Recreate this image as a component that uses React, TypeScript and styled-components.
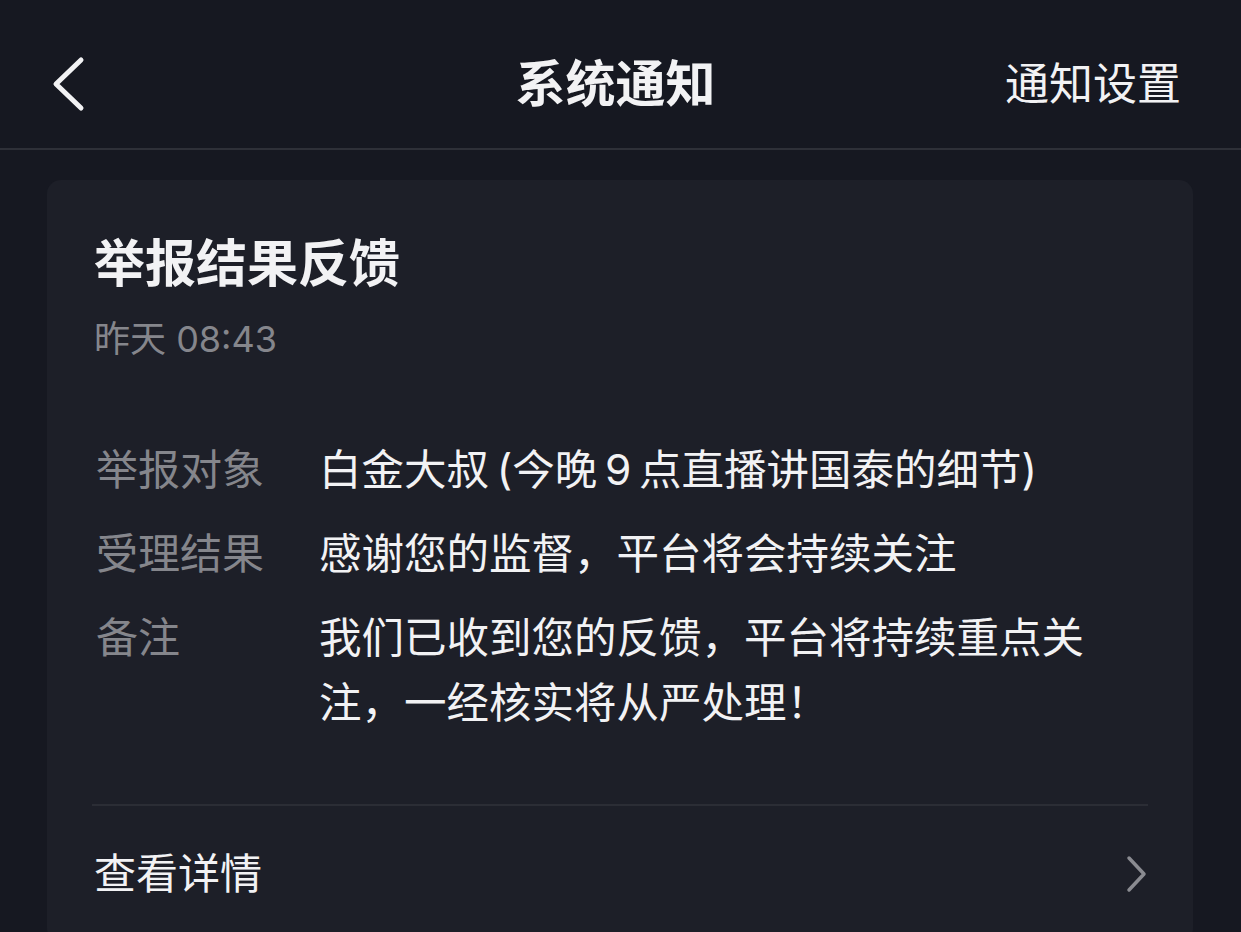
import React from 'react';
import styled, { createGlobalStyle } from 'styled-components';

const GlobalStyle = createGlobalStyle`
  html, body {
    margin: 0;
    padding: 0;
    background: #161821;
  }
  body {
    font-family: "Inter", "Noto Sans CJK SC", "Noto Sans", "Liberation Sans", sans-serif;
    color: #f2f2f4;
    -webkit-font-smoothing: antialiased;
  }
`;

const Page = styled.div`
  width: 1241px;
  height: 932px;
  overflow: hidden;
  background: #161821;
`;

const NavBar = styled.header`
  height: 150px;
  padding-top: 20px;
  box-sizing: border-box;
  border-bottom: 2px solid #2e3038;
  display: grid;
  grid-template-columns: 1fr auto 1fr;
  align-items: center;
  padding-left: 50px;
  padding-right: 60px;
`;

const BackButton = styled.button`
  justify-self: start;
  background: none;
  border: 0;
  padding: 0;
  display: flex;
  color: #f2f2f4;
`;

const NavTitle = styled.h1`
  margin: 0;
  font-size: 50px;
  line-height: 60px;
  font-weight: 700;
  color: #f2f2f4;
`;

const NavAction = styled.span`
  justify-self: end;
  font-size: 44px;
  line-height: 60px;
  color: #f2f2f4;
`;

const Card = styled.section`
  margin: 30px 48px 0 47px;
  background: #1d1f28;
  border-radius: 14px;
  padding: 54px 45px 0 47px;
`;

const CardTitle = styled.h2`
  margin: 0;
  font-size: 51px;
  line-height: 60px;
  font-weight: 700;
  color: #f2f2f4;
`;

const Time = styled.div`
  margin-top: 23px;
  font-size: 36px;
  line-height: 44px;
  color: #85868c;
`;

const Fields = styled.dl`
  margin: 76px 0 0;
  display: grid;
  grid-template-columns: 225px 790px;
  row-gap: 19px;
`;

const Label = styled.dt`
  margin: 0;
  padding-left: 2px;
  font-size: 42px;
  line-height: 65px;
  color: #85868c;
`;

const Value = styled.dd`
  margin: 0;
  font-size: 42.5px;
  line-height: 65px;
  color: #f2f2f4;
`;

const Divider = styled.hr`
  margin: 69px 0 0 -2px;
  border: 0;
  height: 2px;
  background: #2b2d35;
`;

const DetailRow = styled.div`
  height: 136px;
  display: flex;
  align-items: center;
  justify-content: space-between;
`;

const DetailText = styled.span`
  font-size: 42px;
  line-height: 60px;
  color: #f2f2f4;
`;

const Chevron = styled.svg<{ $color: string }>`
  display: block;
  color: ${(p) => p.$color};
`;

const fields = [
  { label: '举报对象', value: '白金大叔\u2009(今晚\u20099\u2009点直播讲国泰的细节)' },
  { label: '受理结果', value: '感谢您的监督，平台将会持续关注' },
  { label: '备注', value: '我们已收到您的反馈，平台将持续重点关注，一经核实将从严处理！' },
];

export default function App() {
  return (
    <Page>
      <GlobalStyle />
      <NavBar>
        <BackButton aria-label="返回">
          <Chevron $color="#f2f2f4" width="36" height="56" viewBox="0 0 36 56">
            <path d="M31 4 L6 28 L31 52" fill="none" stroke="currentColor" strokeWidth="5" strokeLinecap="round" strokeLinejoin="round" />
          </Chevron>
        </BackButton>
        <NavTitle>系统通知</NavTitle>
        <NavAction>通知设置</NavAction>
      </NavBar>
      <Card>
        <CardTitle>举报结果反馈</CardTitle>
        <Time>昨天 08:43</Time>
        <Fields>
          {fields.map((f) => (
            <React.Fragment key={f.label}>
              <Label>{f.label}</Label>
              <Value>{f.value}</Value>
            </React.Fragment>
          ))}
        </Fields>
        <Divider />
        <DetailRow>
          <DetailText>查看详情</DetailText>
          <Chevron $color="#8a8b91" width="22" height="38" viewBox="0 0 22 38">
            <path d="M3 3 L18 19 L3 35" fill="none" stroke="currentColor" strokeWidth="3.5" strokeLinecap="round" strokeLinejoin="round" />
          </Chevron>
        </DetailRow>
      </Card>
    </Page>
  );
}
